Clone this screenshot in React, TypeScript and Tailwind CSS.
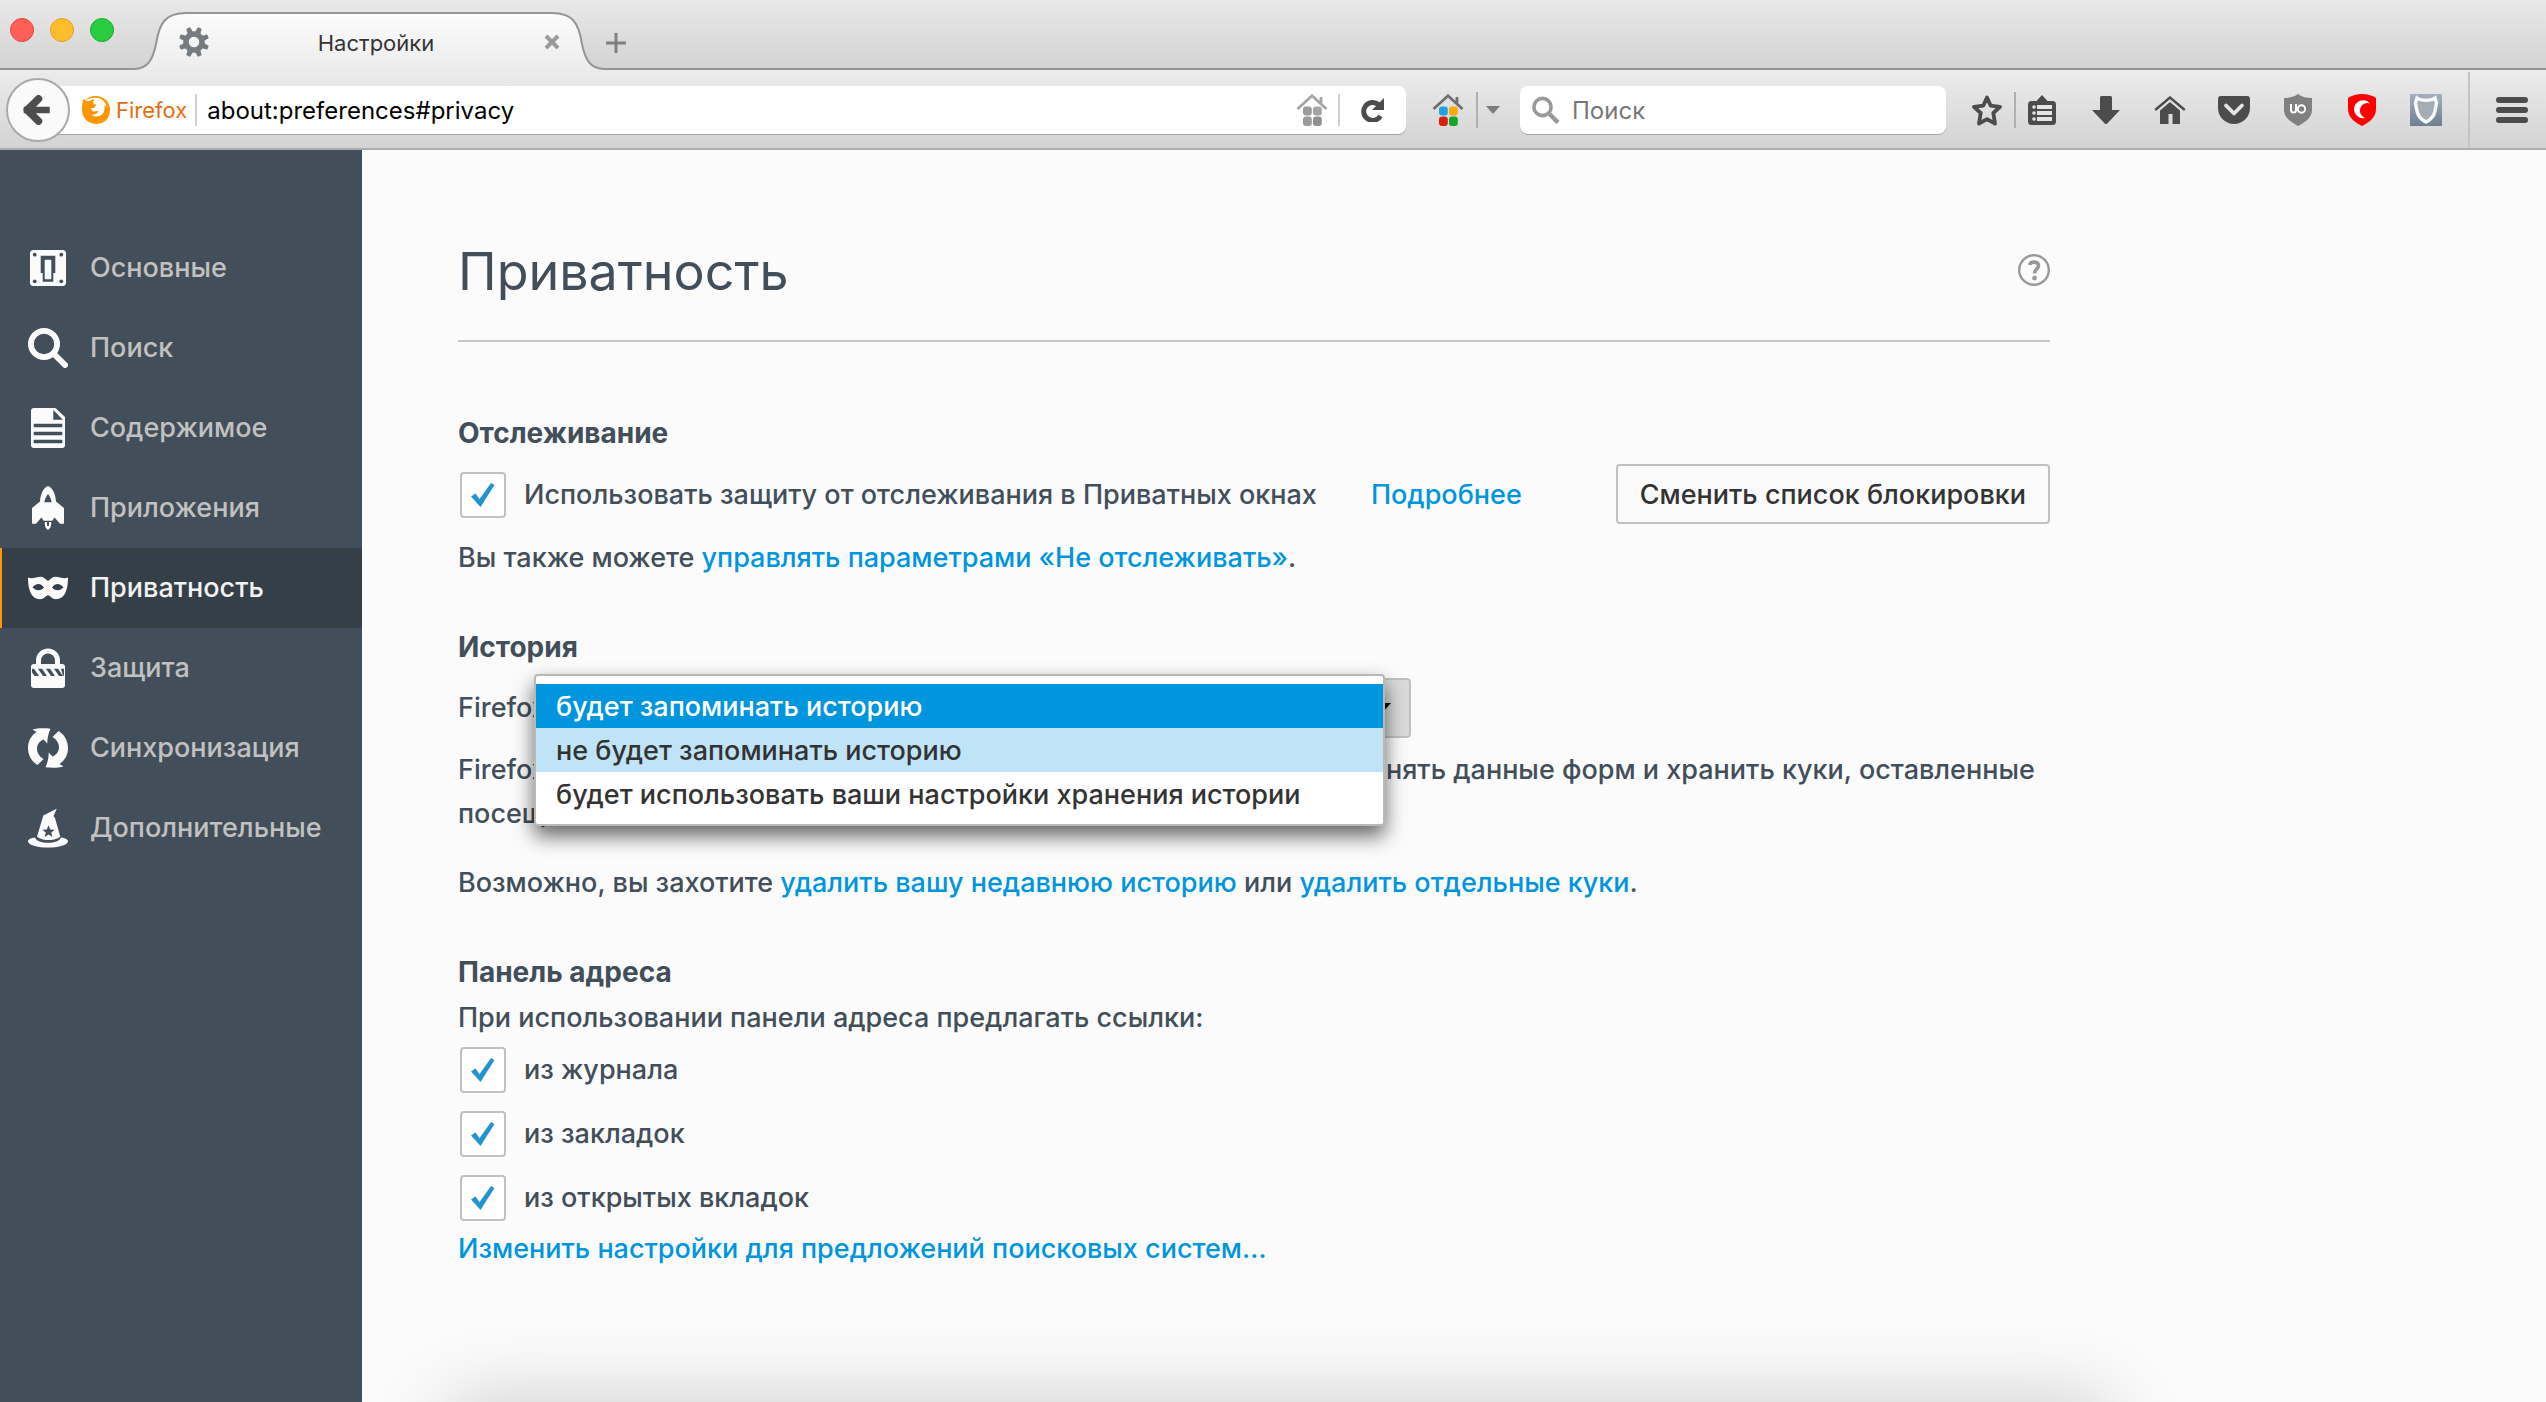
import React, { useState } from 'react';

const GeneralIcon = () => (
  <svg viewBox="0 0 40 40" className="w-10 h-10" fill="#fbfbfb">
    <path
      fillRule="evenodd"
      d="M5.500 2h29A3.500 3.500 0 0 1 38 5.500v29a3.500 3.500 0 0 1-3.500 3.500h-29A3.500 3.500 0 0 1 2 34.500v-29A3.500 3.500 0 0 1 5.500 2ZM12.700 7.700V25h2v8.700h10.600V25h2V7.700Z"
    />
    <rect x="16.700" y="11.700" width="6.600" height="19.600" rx="1" />
    <g fill="#424f5a">
      <circle cx="6.700" cy="6.700" r="1.900" />
      <circle cx="33.300" cy="6.700" r="1.900" />
      <circle cx="6.700" cy="33.300" r="1.900" />
      <circle cx="33.300" cy="33.300" r="1.900" />
    </g>
  </svg>
);

const SearchCatIcon = () => (
  <svg viewBox="0 0 40 40" className="w-10 h-10" fill="none" stroke="#fbfbfb">
    <circle cx="16" cy="16" r="13.100" strokeWidth="5.800" />
    <path d="M25.500 25.500 37 37" strokeWidth="6" strokeLinecap="round" />
  </svg>
);

const ContentIcon = () => (
  <svg viewBox="0 0 40 40" className="w-10 h-10">
    <path d="M6 0h21.500L37 9v28a3 3 0 0 1-3 3H6a3 3 0 0 1-3-3V3a3 3 0 0 1 3-3Z" fill="#fbfbfb" />
    <path d="M25.300 2v9.700h9.500ZM5.700 15.700h28.600v3.600H5.700ZM5.700 23.700h28.600v3.600H5.700ZM5.700 31.700h28.600v3.600H5.700Z" fill="#424f5a" />
  </svg>
);

const ApplicationsIcon = () => (
  <svg viewBox="0 0 40 40" className="w-10 h-10 overflow-visible" fill="#fbfbfb">
    <path
      fillRule="evenodd"
      d="M20-2c4 1.500 7.500 7 8 15.500l8 6.500v15.700h-4l-5.500-6.200-2.200 3.200h-8.600l-2.200-3.200L8 35.700H4V20l8-6.500C12.500 5 16-.5 20-2Zm0 8c-1.500 1.500-3 5-3.700 8.300h7.400C23 11 21.500 7.500 20 6Z"
    />
    <path fillRule="evenodd" d="M17 34h6c.8 3.500-.8 6.500-3 8-2.200-1.500-3.800-4.500-3-8Zm2 0v3.500l1 .8 1-.8V34Z" />
  </svg>
);

const PrivacyIcon = () => (
  <svg viewBox="0 0 40 40" className="w-10 h-10" fill="#fbfbfb">
    <path
      fillRule="evenodd"
      d="M0 9.500c4 2 9-1 13-.8 3 .3 5 2.800 7 4.300 2-1.500 4-4 7-4.300 4-.2 9 2.800 13 .8 0 12-3 21.500-12 21.800-4 0-6-4-8-4s-4 4-8 4C3 31 0 21.500 0 9.500Zm4.500 9.700c3.500 4 8.500 3.800 11.500.3-3.500-5.500-8.500-4-11.500-.3Zm31 0c-3-3.700-8-5.200-11.500.3 3 3.500 8 3.700 11.500-.3Z"
    />
  </svg>
);

const SecurityIcon = () => (
  <svg viewBox="0 0 40 40" className="w-10 h-10">
    <path d="M10.500 17v-4.500a9.500 9.500 0 0 1 19 0V17" fill="none" stroke="#fbfbfb" strokeWidth="5" />
    <rect x="3" y="16" width="34" height="24" rx="3" fill="#fbfbfb" />
    <path
      d="M4 20.700h2l5 7.300H6.500L4 24.500ZM10 20.700h4l5 7.300h-4ZM18 20.700h4l5 7.300h-4ZM26 20.700h4l5 7.300h-4ZM33 20.700h3V28l-1-.5Z"
      fill="#424f5a"
    />
  </svg>
);

const SyncArrow = 'M4.500 1.500C10 0 16 0 22.500.7 20.500 5 19.300 10 19.300 15.500L15.500 11.500C11 13.500 9 17 9 20.500c0 4.500 2.500 8 6.500 10.500L9.500 37C3.500 33.500 0 27 0 20 0 13.500 3 7.500 8.500 4Z';

const SyncIcon = () => (
  <svg viewBox="0 0 40 40" className="w-10 h-10" fill="#fbfbfb">
    <path d={SyncArrow} />
    <path d={SyncArrow} transform="rotate(180 20 20)" />
  </svg>
);

const AdvancedIcon = () => (
  <svg viewBox="0 0 40 40" className="w-10 h-10" fill="#fbfbfb">
    <path
      fillRule="evenodd"
      d="M28.700.7 25.500 8l1.500 2 5.300 18.700c-6 4.500-17.300 4.500-23.300 0L15.300 7.500ZM20.500 17.300l-1.700 4.200-4.500.3 3.500 2.800-1.200 4.300 3.900-2.400 3.900 2.400-1.200-4.300 3.500-2.800-4.500-.3Z"
    />
    <path d="M7 29.500C9 36.500 31 36.500 33 29.500c4 .5 7 1.800 7 4-2 8-38 8-40 0 0-2.200 3-3.500 7-4Z" />
  </svg>
);

const categories = [
  { name: 'Основные', icon: GeneralIcon },
  { name: 'Поиск', icon: SearchCatIcon },
  { name: 'Содержимое', icon: ContentIcon },
  { name: 'Приложения', icon: ApplicationsIcon },
  { name: 'Приватность', icon: PrivacyIcon },
  { name: 'Защита', icon: SecurityIcon },
  { name: 'Синхронизация', icon: SyncIcon },
  { name: 'Дополнительные', icon: AdvancedIcon },
];

const historyModes = [
  'будет запоминать историю',
  'не будет запоминать историю',
  'будет использовать ваши настройки хранения истории',
];

function TabCurve({ flip = false }: { flip?: boolean }) {
  const id = flip ? 'tab-end' : 'tab-start';
  return (
    <svg viewBox="0 0 60 58" className={flip ? 'w-[60px] h-[58px] -scale-x-100' : 'w-[60px] h-[58px]'}>
      <defs>
        <linearGradient id={id} x1="0" y1="0" x2="0" y2="1">
          <stop offset="0" stopColor="#fcfcfc" />
          <stop offset="1" stopColor="#ececec" />
        </linearGradient>
      </defs>
      <path d="M0 58C18 57 23 45 26 32 29.500 10 36 1 56 1H60V58Z" fill={`url(#${id})`} />
      <path d="M0 57H4C18 57 23 47 26 32 29.500 10 36 1 56 1H60" fill="none" stroke="#959595" strokeWidth="2" />
    </svg>
  );
}

function GearIcon() {
  return (
    <svg viewBox="0 0 32 32" className="w-8 h-8">
      <g fill="#767b80">
        {[22.5, 67.5, 112.5, 157.5, 202.5, 247.5, 292.5, 337.5].map((a) => (
          <path key={a} d="M13.200 7 13.800 1.500Q14 .8 14.700.8h2.600q.7 0 .9.700L18.800 7Z" transform={`rotate(${a} 16 16)`} />
        ))}
      </g>
      <circle cx="16" cy="16" r="8" fill="none" stroke="#767b80" strokeWidth="5.500" />
    </svg>
  );
}

function TabStrip() {
  return (
    <div className="flex h-[70px] items-end bg-linear-to-b from-[#e9e9e9] to-[#d2d2d2]">
      <div className="flex h-full w-[130px] items-start gap-4 border-b-2 border-[#959595] pt-[18px] pl-2.5">
        <button aria-label="Закрыть окно" className="h-6 w-6 rounded-full border border-[#e2463f] bg-[#ff5f57]" />
        <button aria-label="Свернуть" className="h-6 w-6 rounded-full border border-[#e0a123] bg-[#ffbd2e]" />
        <button aria-label="Развернуть" className="h-6 w-6 rounded-full border border-[#14ae2a] bg-[#28cd41]" />
      </div>
      <TabCurve />
      <div className="z-10 flex h-[58px] w-[358px] items-center border-t-2 border-[#959595] bg-linear-to-b from-[#fcfcfc] to-[#ececec]">
        <span className="-ml-3">
          <GearIcon />
        </span>
        <span className="flex-1 pt-0.5 pl-1.5 text-center text-[22px] text-[#333]">Настройки</span>
        <button aria-label="Закрыть вкладку" className="z-10 -mr-5 flex h-8 w-8 shrink-0 items-center justify-center">
          <svg viewBox="0 0 16 16" className="h-4 w-4 shrink-0" stroke="#9a9a9a" strokeWidth="4">
            <path d="M2 2 14 14M14 2 2 14" />
          </svg>
        </button>
      </div>
      <TabCurve flip />
      <div className="flex h-full flex-1 items-center border-b-2 border-[#959595] pt-[18px]">
        <button aria-label="Новая вкладка" className="flex h-8 w-4 items-center justify-center">
          <svg viewBox="0 0 20 20" className="h-5 w-5 shrink-0" stroke="#808080" strokeWidth="3">
            <path d="M10 0V20M0 10H20" />
          </svg>
        </button>
      </div>
    </div>
  );
}

function FirefoxLogo() {
  return (
    <svg viewBox="0 0 28 28" className="h-7 w-7 shrink-0">
      <path
        d="M14 0C19 0 28 3.500 28 14S20 28 14 28 0 23 0 14C0 9 .5 5 2 2.500L3.500 4.500C7 0 12 0 14 0Z"
        fill="#ff9500"
      />
      <path
        d="M3.500 4.800C7 1.500 13 1 17.500 2.300c3.500 1.500 6.500 4.500 7 9.200-.9-1.500-1.700-2-2.200-2 .6 3 .3 6.800-2.300 9.100-3 2.600-7.500 2.500-10.500.1 3 .4 4.800-1.200 6.300-1.900.8-.4.6-1.500-.2-1.700-2-.3-3 .9-4.700.1-1.200-.6-1.700-1.600-1.700-2.600 1-.8 2-.4 3-.6.200-1.700 2-2 2.600-3.400-1.500-.3-3-.4-3.800-1.600.2-1.400.8-2.500 1.800-3.500C9.500 3 8 4.300 6.800 5.300 5.600 5.200 4.500 5.200 3.500 4.800Z"
        fill="#fff"
      />
    </svg>
  );
}

function TilesHouse({ roof, colors }: { roof: string; colors: string[] }) {
  return (
    <svg viewBox="0 0 32 32" className="h-8 w-8">
      <path d="M1.500 15 16 1.800 30.500 15M25 9V3" fill="none" stroke={roof} strokeWidth="2.800" />
      <rect x="7" y="12.500" width="8.800" height="9" rx="3" fill={colors[0]} />
      <rect x="17" y="12.500" width="8.800" height="9" rx="3" fill={colors[1]} />
      <rect x="7" y="22.500" width="8.800" height="9.500" rx="3" fill={colors[2]} />
      <rect x="17" y="22.500" width="8.800" height="9.500" rx="3" fill={colors[3]} />
    </svg>
  );
}

function NavBar() {
  return (
    <div className="flex h-20 items-center border-b-2 border-[#adadad] bg-linear-to-b from-[#ececec] to-[#d3d3d3] pt-0.5 pl-1.5">
      <button
        aria-label="Назад"
        className="z-10 flex h-16 w-16 shrink-0 items-center justify-center rounded-full border-2 border-[#a9a9a9] bg-[#fafafa]"
      >
        <svg viewBox="0 0 28 30" className="-ml-1 h-[30px] w-7" fill="none" stroke="#4c4c4c" strokeWidth="7.500" strokeLinejoin="round">
          <path d="M5 15H24.500" strokeLinecap="square" strokeWidth="6.500" />
          <path d="M16.500 3.800 5.300 15 16.500 26.200" strokeLinecap="round" />
        </svg>
      </button>
      <div className="-ml-4 flex h-12 flex-1 items-center rounded-r-lg bg-white pl-7 shadow-[0_1px_0_#a6a6a6]">
        <FirefoxLogo />
        <span className="ml-1.5 text-[22px] text-[#e07010]">Firefox</span>
        <span className="mr-2.5 ml-2 h-8 w-0.5 shrink-0 bg-[#cfcfcf]" />
        <input
          aria-label="Адрес"
          readOnly
          value="about:preferences#privacy"
          className="min-w-0 flex-1 bg-transparent pt-0.5 text-[24px] text-black outline-none"
        />
        <button aria-label="Плитки">
          <TilesHouse roof="#a5a5a5" colors={['#9a9a9a', '#a3a3a3', '#9a9a9a', '#909090']} />
        </button>
        <span className="ml-2.5 h-8 w-0.5 bg-[#cfcfcf]" />
        <button aria-label="Обновить" className="flex w-[66px] justify-center">
          <svg viewBox="0 0 24 24" className="h-6 w-6">
            <path d="M17.500 6.500A9 9 0 1 0 19.500 18" fill="none" stroke="#4c4c4c" strokeWidth="5" />
            <path d="M23 0V12H11Z" fill="#4c4c4c" />
          </svg>
        </button>
      </div>
      <button aria-label="Домашние плитки" className="ml-[26px] shrink-0">
        <TilesHouse roof="#6f6f6f" colors={['#1ba4e0', '#ffa800', '#d92010', '#12a52a']} />
      </button>
      <span className="ml-3 h-9 w-0.5 bg-[#b0b0b0]" />
      <button aria-label="Ещё" className="flex w-[30px] justify-center">
        <svg viewBox="0 0 14 8" className="h-2 w-3.5">
          <path d="M0 0H14L7 8Z" fill="#7c7c7c" />
        </svg>
      </button>
      <label className="ml-3 flex h-12 w-[426px] items-center rounded-lg bg-white pl-3 shadow-[0_1px_0_#a6a6a6]">
        <svg viewBox="0 0 28 28" className="h-7 w-7 shrink-0" fill="none" stroke="#999">
          <circle cx="10.500" cy="11" r="8.600" strokeWidth="3.600" />
          <path d="M16.500 17 26 26.500" strokeWidth="4.500" />
        </svg>
        <input
          type="search"
          aria-label="Поиск"
          placeholder="Поиск"
          className="ml-3 min-w-0 flex-1 bg-transparent pt-0.5 text-[24px] outline-none placeholder:text-[#777]"
        />
      </label>

      <button aria-label="Добавить в закладки" className="ml-3.5 flex w-[54px] justify-center">
        <svg viewBox="0 0 32 32" className="h-8 w-8" fill="none" stroke="#4c4c4c" strokeWidth="3.800" strokeLinejoin="round">
          <path d="M16 3.500 19.600 11.600 29 12.800 22.300 19 24 29.500 16 25.200 8 29.500 9.700 19 3 12.800 12.400 11.600Z" />
        </svg>
      </button>
      <span className="h-9 w-0.5 bg-[#b0b0b0]" />
      <button aria-label="Закладки" className="flex w-[52px] justify-center">
        <svg viewBox="0 0 28 30" className="h-[30px] w-7">
          <path d="M3.500 6H8.500L14 0 19.500 6H24.500A3.500 3.500 0 0 1 28 9.500v17a3.500 3.500 0 0 1-3.500 3.500h-21A3.500 3.500 0 0 1 0 26.500v-17A3.500 3.500 0 0 1 3.500 6Z" fill="#4c4c4c" />
          <g fill="#e4e4e4">
            <rect x="9" y="10" width="15" height="4" />
            <rect x="9" y="16" width="15" height="4" />
            <rect x="9" y="22" width="15" height="4" />
            <circle cx="6" cy="12" r="1.800" />
            <circle cx="6" cy="18" r="1.800" />
            <circle cx="6" cy="24" r="1.800" />
          </g>
        </svg>
      </button>
      <button aria-label="Загрузки" className="ml-1.5 flex w-16 justify-center">
        <svg viewBox="0 0 28 28" className="h-7 w-7">
          <path d="M9.500 0h9a1.500 1.500 0 0 1 1.500 1.500V14h8L15.500 27.300a2 2 0 0 1-3 0L0 14H8V1.500A1.500 1.500 0 0 1 9.500 0Z" fill="#4c4c4c" />
        </svg>
      </button>
      <button aria-label="Домой" className="flex w-16 justify-center">
        <svg viewBox="0 0 32 28" className="h-7 w-8">
          <path d="M1.200 14 16 1.500 30.800 14" fill="none" stroke="#4c4c4c" strokeWidth="2.400" />
          <path d="M16 6 26 14.500V28H18.500V18H14.500V28H6V14.500Z" fill="#4c4c4c" />
        </svg>
      </button>
      <button aria-label="Pocket" className="flex w-16 justify-center">
        <svg viewBox="0 0 32 28" className="h-7 w-8">
          <path d="M3 0H29a3 3 0 0 1 3 3V12a16 16 0 0 1-32 0V3A3 3 0 0 1 3 0Z" fill="#4c4c4c" />
          <path d="M8 9.500 16 17.500 24 9.500" fill="none" stroke="#e4e4e4" strokeWidth="3.800" strokeLinecap="round" strokeLinejoin="round" />
        </svg>
      </button>
      <button aria-label="uBlock Origin" className="flex w-16 justify-center">
        <svg viewBox="0 0 28 32" className="h-8 w-7">
          <path d="M14 0C18 3 23 4 28 4V16c0 7-6 12-14 16C6 28 0 23 0 16V4C5 4 10 3 14 0Z" fill="#808080" />
          <path d="M7 10v6a2.500 2.500 0 0 0 5 0V10" fill="none" stroke="#fff" strokeWidth="2" />
          <circle cx="17.500" cy="15" r="3.700" fill="none" stroke="#fff" strokeWidth="2" />
        </svg>
      </button>
      <button aria-label="Антивирус" className="flex w-16 justify-center">
        <svg viewBox="0 0 28 32" className="h-8 w-7">
          <path d="M0 4C8-1.300 20-1.300 28 4V15c0 8-6 13-14 17C6 28 0 23 0 15Z" fill="#f00" />
          <path d="M22 9.500A9 9 0 1 0 17 24 7.300 7.300 0 1 1 22 9.500Z" fill="#fff" />
        </svg>
      </button>
      <button aria-label="Щит" className="flex w-16 justify-center">
        <svg viewBox="0 0 32 32" className="h-8 w-8">
          <defs>
            <linearGradient id="shield" x1="0" y1="0" x2="0" y2="1">
              <stop offset="0" stopColor="#a3b0bf" />
              <stop offset="1" stopColor="#6f7f90" />
            </linearGradient>
          </defs>
          <path d="M0 0H32V32H0Z" fill="url(#shield)" />
          <path d="M7 4C11 7 21 7 25 4L26.500 9C25 16 26 23 16 28 6 23 7 16 5.500 9Z" fill="#a4adb6" stroke="#fafafa" strokeWidth="3.400" />
        </svg>
      </button>
      <span className="ml-2.5 h-full w-0.5 bg-[#c4c4c4]" />
      <button aria-label="Меню" className="ml-2 flex w-[68px] justify-center">
        <svg viewBox="0 0 32 26" className="h-[26px] w-8" fill="#4c4c4c">
          <rect width="32" height="6" rx="3" />
          <rect y="10" width="32" height="6" rx="3" />
          <rect y="20" width="32" height="6" rx="3" />
        </svg>
      </button>
    </div>
  );
}

function CheckRow({ label }: { label: string }) {
  const [checked, setChecked] = useState(true);
  return (
    <label className="ml-0.5 flex items-center">
      <span className="grid h-[46px] w-[46px]">
        <input
          type="checkbox"
          checked={checked}
          onChange={(e) => setChecked(e.target.checked)}
          className="col-start-1 row-start-1 appearance-none rounded border-2 border-[#c1c1c1] bg-white"
        />
        {checked && (
          <svg viewBox="0 0 46 46" className="pointer-events-none col-start-1 row-start-1">
            <path d="M11 24.500 15.500 21.500 19.500 27 31 11 34.500 13 20.500 35Z" fill="#2292d0" />
          </svg>
        )}
      </span>
      <span className="ml-[18px]">{label}</span>
    </label>
  );
}

function Link({ children }: { children: React.ReactNode }) {
  return (
    <a href="#privacy" className="text-[#0095dd]">
      {children}
    </a>
  );
}

function HistorySelect() {
  const [mode, setMode] = useState(historyModes[0]);
  return (
    <div className="relative">
      <select
        id="history-mode"
        value={mode}
        onChange={(e) => setMode(e.target.value)}
        className="h-[60px] w-[877px] appearance-none rounded border-2 border-[#c1c1c1] bg-[#dadada] pl-5"
      >
        {historyModes.map((m) => (
          <option key={m}>{m}</option>
        ))}
      </select>
      <svg viewBox="0 0 18 10" className="pointer-events-none absolute top-[25px] right-5 h-2.5 w-[18px]">
        <path d="M0 0H18L9 10Z" fill="#000" />
      </svg>
      <ul
        role="listbox"
        aria-label="Режим истории"
        className="absolute -top-1 left-0 z-10 w-[851px] rounded-sm border-2 border-[#b9b9b9] bg-white py-2 leading-[42px] text-[#333] shadow-[0_10px_20px_rgba(0,0,0,0.6)]"
      >
        {historyModes.map((m, i) => (
          <li
            key={m}
            role="option"
            aria-selected={m === mode}
            onClick={() => setMode(m)}
            className={
              m === mode
                ? 'bg-[#0095dd] pt-0.5 pl-5 text-white'
                : i === 1
                  ? 'bg-[#bfe4f7] pt-0.5 pl-5'
                  : 'pt-0.5 pl-5'
            }
          >
            {m}
          </li>
        ))}
      </ul>
    </div>
  );
}

function PrivacyPane() {
  return (
    <main className="relative flex-1 overflow-hidden bg-[#fbfbfb] pl-24 text-[27px] leading-[44px] font-medium text-[#424e5a]">
      <div className="max-w-[1592px]">
        <header className="flex h-[192px] items-center justify-between border-b-2 border-[#c8c8c8] pt-[50px]">
          <h1 className="pt-1 text-[52px] leading-[60px] font-normal text-[#424f5a]">Приватность</h1>
          <button aria-label="Справка" className="h-8 w-8">
            <svg viewBox="0 0 32 32" className="h-8 w-8" fill="none" stroke="#999">
              <circle cx="16" cy="16" r="14.800" strokeWidth="2.400" />
              <path d="M11.800 11C12.500 7 20.500 7 20.500 11.800 20.500 15 16.500 15 16.500 19.500" strokeWidth="3.600" />
              <circle cx="16.500" cy="24" r="2.400" fill="#999" stroke="none" />
            </svg>
          </button>
        </header>

        <section className="pt-[69px]">
          <h2 className="text-[28px] font-bold">Отслеживание</h2>
          <div className="mt-[9px] flex h-[60px] items-center">
            <div className="flex items-center pt-0.5">
              <CheckRow label="Использовать защиту от отслеживания в Приватных окнах" />
              <span className="ml-[54px]">
                <Link>Подробнее</Link>
              </span>
            </div>
            <button className="ml-auto h-[60px] rounded border-2 border-[#c1c1c1] bg-[#fbfbfb] px-[22px] pt-0.5 text-[#333]">
              Сменить список блокировки
            </button>
          </div>
          <p className="mt-3">
            Вы также можете <Link>управлять параметрами «Не отслеживать»</Link>.
          </p>
        </section>

        <section className="pt-[45px]">
          <h2 className="text-[28px] font-bold">История</h2>
          <div className="mt-[9px] flex items-center">
            <label htmlFor="history-mode" className="w-[76px]">Firefox</label>
            <HistorySelect />
          </div>
          <p className="mt-2.5">
            Firefox будет помнить историю посещений, загрузок и поиска, сохранять данные форм и хранить куки, оставленные
            посещёнными вами веб-сайтами.
          </p>
          <p className="mt-[25px]">
            Возможно, вы захотите <Link>удалить вашу недавнюю историю</Link> или <Link>удалить отдельные куки</Link>.
          </p>
        </section>

        <section className="pt-[45px]">
          <h2 className="text-[28px] font-bold">Панель адреса</h2>
          <p className="mt-0.5">При использовании панели адреса предлагать ссылки:</p>
          <div className="mt-[7px] flex flex-col gap-[18px]">
            <CheckRow label="из журнала" />
            <CheckRow label="из закладок" />
            <CheckRow label="из открытых вкладок" />
          </div>
          <p className="mt-1.5">
            <Link>Изменить настройки для предложений поисковых систем…</Link>
          </p>
        </section>
      </div>
      {/* soft shade rising from the bottom edge */}
      <div className="pointer-events-none absolute right-[20%] -bottom-20 left-[4%] h-20 shadow-[0_0_80px_rgba(0,0,0,0.2)]" />
    </main>
  );
}

export default function App() {
  return (
    <div className="flex min-h-screen flex-col font-['Inter','Liberation_Sans',sans-serif]">
      <TabStrip />
      <NavBar />
      <div className="flex flex-1">
        <nav className="w-[362px] shrink-0 bg-[#424f5a] pt-[78px] text-[27px] font-medium text-[#c1c1c1]">
          {categories.map(({ name, icon: Icon }) => (
            <a
              key={name}
              href="#privacy"
              className={
                name === 'Приватность'
                  ? 'flex h-20 items-center gap-[22px] border-l-2 border-[#ff9500] bg-[#343f48] pl-[26px] text-[#f2f2f2]'
                  : 'flex h-20 items-center gap-[22px] pl-7'
              }
            >
              <Icon />
              {name}
            </a>
          ))}
        </nav>
        <PrivacyPane />
      </div>
    </div>
  );
}
